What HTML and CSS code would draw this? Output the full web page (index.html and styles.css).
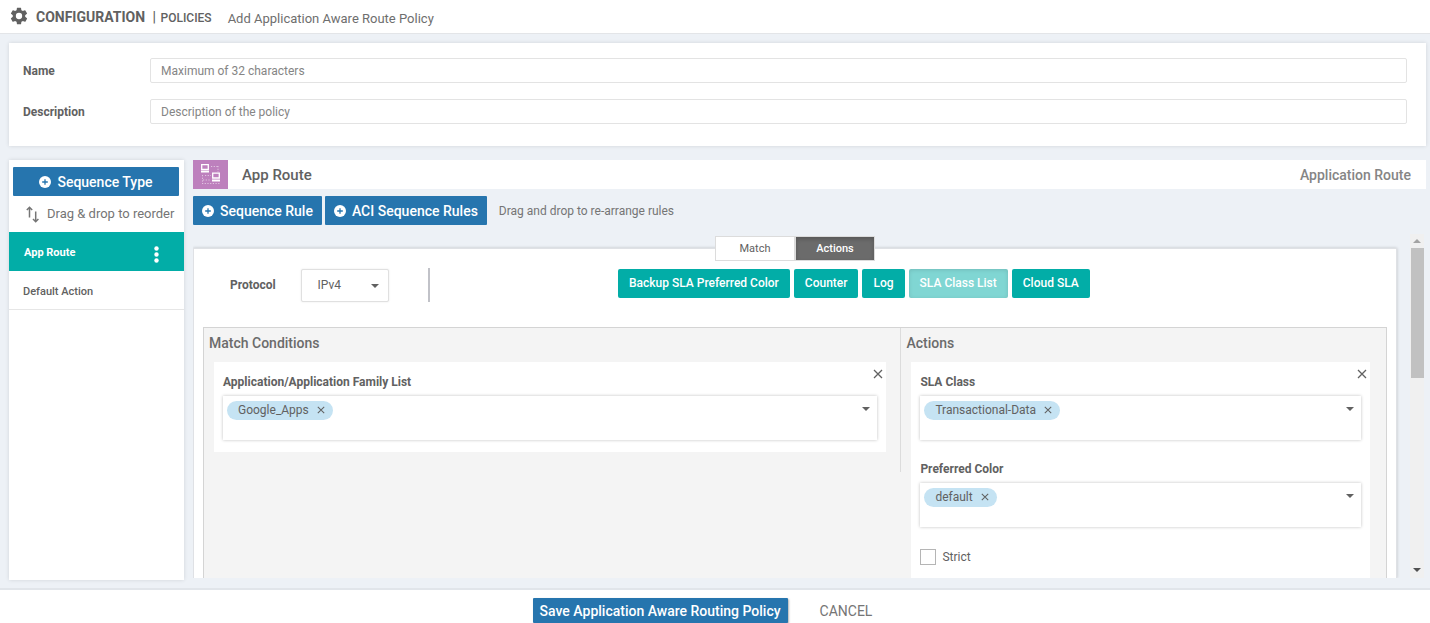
FILE: index.html
```html
<!DOCTYPE html>
<html lang="en">
<head>
<meta charset="utf-8">
<title>Add Application Aware Route Policy</title>
<link rel="stylesheet" href="styles.css">
</head>
<body>
<svg class="defs" aria-hidden="true">
  <symbol id="plus" viewBox="0 0 12 12"><circle cx="6" cy="6" r="6" fill="#fff"/><path d="M6 3.2v5.6M3.2 6h5.6" stroke="#2675ae" stroke-width="1.3" fill="none"/></symbol>
  <symbol id="close" viewBox="0 0 10 10"><path d="M1 1l8 8M9 1l-8 8" stroke="currentColor" stroke-width="1.3" fill="none"/></symbol>
  <symbol id="caret" viewBox="0 0 8 4"><path d="M0 0h8l-4 4z" fill="currentColor"/></symbol>
</svg>
<header class="topbar">
  <svg class="gear" viewBox="0 0 24 24"><path fill="#616161" d="M19.4 13a7.500 7.500 0 0 0 0-2l2.100-1.650a.5.5 0 0 0 .12-.64l-2-3.460a.5.5 0 0 0-.61-.22l-2.490 1a7.300 7.300 0 0 0-1.690-.98l-.38-2.650A.5.5 0 0 0 14 2h-4a.5.5 0 0 0-.49.42l-.38 2.650a7.700 7.700 0 0 0-1.690.98l-2.490-1a.5.5 0 0 0-.61.22l-2 3.460a.5.5 0 0 0 .12.64L4.570 11a8 8 0 0 0 0 2l-2.110 1.650a.5.5 0 0 0-.12.64l2 3.460c.12.22.39.3.61.22l2.490-1c.52.4 1.080.73 1.690.98l.38 2.650c.03.24.24.42.49.42h4c.25 0 .46-.18.49-.42l.38-2.650a7.300 7.300 0 0 0 1.690-.98l2.490 1c.23.09.49 0 .61-.22l2-3.460a.5.5 0 0 0-.12-.64zM12 15.800a3.800 3.800 0 1 1 0-7.600 3.800 3.800 0 0 1 0 7.600z"/></svg>
  <h1 class="title">CONFIGURATION <span class="title-bar">|</span> <span class="title-sub">POLICIES</span></h1>
  <span class="crumb">Add Application Aware Route Policy</span>
</header>

<main class="page">
  <section class="card details">
    <label class="details-label" for="name">Name</label>
    <input class="text-input" id="name" type="text" placeholder="Maximum of 32 characters">
    <label class="details-label" for="description">Description</label>
    <input class="text-input" id="description" type="text" placeholder="Description of the policy">
  </section>

  <div class="workspace">
    <aside class="card sidebar">
      <button class="btn btn-blue btn-wide" type="button"><svg class="plus"><use href="#plus"/></svg>Sequence Type</button>
      <div class="reorder">
        <svg class="reorder-icon" viewBox="0 0 14 17"><path d="M3.500 11.500V1.500M.8 4l2.700-2.700L6.200 4M9.700 5.500v10M7 13l2.700 2.700 2.700-2.700" fill="none" stroke="#757575" stroke-width="1.500"/></svg>
        Drag &amp; drop to reorder
      </div>
      <div class="seq seq-active"><span>App Route</span>
        <button class="dots" type="button" aria-label="Options"><svg viewBox="0 0 5 17"><g fill="#fff"><circle cx="2.500" cy="2.500" r="2.200"/><circle cx="2.500" cy="8.500" r="2.200"/><circle cx="2.500" cy="14.500" r="2.200"/></g></svg></button>
      </div>
      <div class="seq">Default Action</div>
    </aside>

    <section class="content">
      <div class="heading">
        <svg class="heading-icon" viewBox="0 0 35 29"><path fill="#bd80bd" d="M0 0h35v29H0z"/><g fill="none" stroke="#fff" stroke-width="1.300"><path d="M8.700 4.700h6.600v4.600H8.700zM19.700 13.200h6.600v4.800h-6.600z"/></g><path d="M8 10.500h8v2H8zM19 19.500h8v2h-8z" fill="#fff"/><path d="M18 6.500h7M25 6v6M9.500 15v8M9 23.500h18M10 20h8M12 15.500h6" fill="none" stroke="#fff" stroke-opacity=".55" stroke-dasharray="1.200 1.500"/></svg>
        <h2 class="heading-title">App Route</h2>
        <span class="heading-type">Application Route</span>
      </div>
      <div class="rule-bar">
        <button class="btn btn-blue" type="button"><svg class="plus"><use href="#plus"/></svg>Sequence Rule</button>
        <button class="btn btn-blue" type="button"><svg class="plus"><use href="#plus"/></svg>ACI Sequence Rules</button>
        <span class="hint">Drag and drop to re-arrange rules</span>
      </div>

      <div class="editor">
        <div class="editor-main">
          <div class="tabs">
            <button class="tab" type="button">Match</button>
            <button class="tab tab-on" type="button">Actions</button>
          </div>
          <div class="rule">
            <div class="toolbar">
              <div class="protocol">
                <label class="field-label" for="protocol">Protocol</label>
                <span class="select-wrap">
                  <select class="select" id="protocol"><option>IPv4</option></select>
                  <svg class="caret select-caret"><use href="#caret"/></svg>
                </span>
                <span class="separator"></span>
              </div>
              <div class="actions">
                <button class="btn-teal" type="button">Backup SLA Preferred Color</button>
                <button class="btn-teal" type="button">Counter</button>
                <button class="btn-teal" type="button">Log</button>
                <button class="btn-teal btn-faded" type="button">SLA Class List</button>
                <button class="btn-teal" type="button">Cloud SLA</button>
              </div>
            </div>

            <div class="panel">
              <div class="column column-match">
                <h3 class="column-title">Match Conditions</h3>
                <div class="block">
                  <button class="block-close" type="button" aria-label="Remove"><svg><use href="#close"/></svg></button>
                  <div class="field-label">Application/Application Family List</div>
                  <div class="multi">
                    <span class="chip">Google_Apps<button class="chip-close" type="button" aria-label="Remove Google_Apps"><svg><use href="#close"/></svg></button></span>
                    <svg class="caret"><use href="#caret"/></svg>
                  </div>
                </div>
              </div>
              <div class="column column-actions">
                <h3 class="column-title">Actions</h3>
                <div class="block block-tall">
                  <button class="block-close" type="button" aria-label="Remove"><svg><use href="#close"/></svg></button>
                  <div class="field-label">SLA Class</div>
                  <div class="multi">
                    <span class="chip">Transactional-Data<button class="chip-close" type="button" aria-label="Remove Transactional-Data"><svg><use href="#close"/></svg></button></span>
                    <svg class="caret"><use href="#caret"/></svg>
                  </div>
                  <div class="field-label field-label-next">Preferred Color</div>
                  <div class="multi">
                    <span class="chip">default<button class="chip-close" type="button" aria-label="Remove default"><svg><use href="#close"/></svg></button></span>
                    <svg class="caret"><use href="#caret"/></svg>
                  </div>
                  <label class="check"><input class="check-box" type="checkbox">Strict</label>
                </div>
              </div>
            </div>
          </div>
        </div>
        <div class="scroller">
          <svg class="scroll-up" viewBox="0 0 8 4"><path d="M0 4h8l-4-4z" fill="#a3a3a3"/></svg>
          <div class="thumb"></div>
          <svg class="scroll-down" viewBox="0 0 8 4"><path d="M0 0h8l-4 4z" fill="#505050"/></svg>
        </div>
      </div>
    </section>
  </div>
</main>

<footer class="footer">
  <button class="btn btn-blue btn-save" type="button">Save Application Aware Routing Policy</button>
  <button class="cancel" type="button">CANCEL</button>
</footer>
</body>
</html>
```
FILE: styles.css
```css
* { box-sizing: border-box; }

body {
  margin: 0;
  height: 100vh;
  display: flex;
  flex-direction: column;
  overflow: hidden;
  background: #edf1f6;
  color: #616161;
  font: 12px/16px Roboto, "Liberation Sans", sans-serif;
}

button, input, select { font: inherit; color: inherit; }
button { border: 0; padding: 0; background: none; cursor: pointer; white-space: nowrap; }
h1, h2, h3 { margin: 0; }
svg { display: block; flex: none; }
.defs { position: absolute; width: 0; height: 0; }

.topbar {
  display: flex;
  align-items: center;
  height: 34px;
  padding-left: 9px;
  background: #fff;
  border-bottom: 1px solid #e3e5e8;
}
.gear { width: 20px; height: 20px; margin: 0 7px 2px 0; }
.title { margin-top: 2px; font-size: 14px; font-weight: 700; line-height: 20px; }
.title-bar { margin: 0 1px 0 4px; font-weight: 500; }
.title-sub { font-size: 12px; font-weight: 500; }
.crumb { margin: 4px 0 0 16px; font-size: 13px; color: #6e6e6e; }

.page {
  flex: 1;
  min-height: 0;
  display: flex;
  flex-direction: column;
  gap: 14px;
  padding: 9px 4px 8px 9px;
}
.card { background: #fff; box-shadow: 0 0 4px rgba(0, 0, 0, .12); }

.details {
  display: grid;
  grid-template-columns: 127px 1fr;
  row-gap: 16px;
  align-items: center;
  padding: 15px 19px 22px 14px;
}
.details-label, .field-label { font-weight: 700; }
.text-input {
  height: 25px;
  width: 100%;
  padding: 0 10px;
  border: 1px solid #e3e3e3;
  border-radius: 2px;
  background: #fff;
}
.text-input::placeholder { color: #858585; opacity: 1; }

.workspace { flex: 1; min-height: 0; display: flex; gap: 9px; }
.sidebar { width: 175px; flex: none; padding-top: 7px; }

.btn {
  display: flex;
  align-items: center;
  justify-content: center;
  height: 29px;
  padding: 0 9px;
  border-radius: 1px;
  font-size: 14px;
  font-weight: 500;
}
.btn-blue { background: #2675ae; color: #fff; }
.btn-wide { width: calc(100% - 9px); margin-left: 4px; }
.plus { width: 12px; height: 12px; margin-right: 6px; }

.reorder {
  display: flex;
  align-items: center;
  gap: 7px;
  height: 36px;
  padding-left: 17px;
  font-size: 13px;
  color: #757575;
  white-space: nowrap;
}
.reorder-icon { width: 14px; height: 17px; }
.seq {
  display: flex;
  align-items: center;
  justify-content: space-between;
  height: 39px;
  padding: 3px 25px 0 14px;
  border-bottom: 1px solid #e6e6e6;
  font-size: 11px;
  font-weight: 500;
}
.seq-active { background: #02ada7; border-color: #02ada7; color: #fff; font-weight: 700; padding-left: 15px; }
.dots { margin-top: 3px; }
.dots svg { width: 5px; height: 17px; }

.content { flex: 1; min-width: 0; display: flex; flex-direction: column; }
.heading { display: flex; align-items: center; height: 29px; background: #fff; font-size: 14px; font-weight: 500; }
.heading-icon { width: 35px; height: 29px; }
.heading-title { margin-left: 14px; font-size: 15px; font-weight: 500; }
.heading-type { margin: 0 15px 0 auto; color: #858585; }
.rule-bar { display: flex; align-items: center; gap: 3px; margin-top: 7px; }
.hint { margin-left: 9px; color: #757575; }

.editor { flex: 1; min-height: 0; display: flex; gap: 13px; margin: 9px 2px 2px 0; overflow: hidden; }
.editor-main { flex: 1; min-width: 0; display: flex; flex-direction: column; align-items: center; padding: 2px 0 0; }
.tabs { display: flex; z-index: 1; width: 160px; height: 25px; margin-bottom: -13px; }
.tab { flex: 1; background: #fff; border: 1px solid #dcdcdc; font-size: 11px; }
.tab-on { background: #6b6b6b; color: #fff; font-weight: 500; box-shadow: inset 0 2px 4px rgba(0, 0, 0, .2); }

.rule {
  flex: 1;
  min-height: 0;
  width: 100%;
  display: flex;
  flex-direction: column;
  padding: 19px 9px 0;
  background: #fff;
  border: 1px solid #dfe1e5;
  border-width: 1px 1px 0;
  box-shadow: 0 0 3px rgba(0, 0, 0, .2);
}
.toolbar { display: grid; grid-template-columns: 415px 1fr; align-items: start; }
.protocol { display: flex; align-items: center; padding-left: 27px; }
.select-wrap { position: relative; margin: 0 39px 0 25px; }
.select {
  display: block;
  width: 88px;
  height: 33px;
  padding: 0 16px;
  appearance: none;
  border: 1px solid #e0e0e0;
  border-radius: 2px;
  background: #fff;
  box-shadow: 0 0 2px rgba(0, 0, 0, .1);
}
.caret { width: 8px; height: 4px; color: #616161; }
.select-caret { position: absolute; right: 10px; top: 15px; pointer-events: none; }
.separator { width: 2px; height: 34px; background: #c1c2c8; }
.actions { display: flex; gap: 4px; padding-top: 1px; }
.btn-teal {
  height: 29px;
  padding: 0 11px 1px;
  border-radius: 2px;
  background: #02ada7;
  color: #fff;
  font-weight: 500;
}
.btn-faded { background: #80d6d3; box-shadow: inset 0 1px 4px rgba(0, 0, 0, .12); }

.panel {
  flex: 1;
  min-height: 0;
  display: grid;
  grid-template-columns: 59fr 41fr;
  align-items: start;
  margin-top: 25px;
  background: #f4f4f4;
  border: 1px solid #d4d4d4;
  border-bottom: 0;
}
.column { padding: 7px 14px 0 10px; }
.column-match { min-height: 144px; border-right: 1px solid #dcdcdc; }
.column-actions { padding-right: 16px; }
.column-title { margin: 0 0 11px -5px; font-size: 14px; font-weight: 500; color: #6b6b6b; }
.block { position: relative; padding: 12px 9px; background: #fff; }
.block-tall { padding-bottom: 24px; }
.block-close { position: absolute; right: 3px; top: 7px; }
.block-close svg { width: 10px; height: 10px; }
.field-label-next { margin-top: 21px; }
.multi {
  display: flex;
  align-items: flex-start;
  justify-content: space-between;
  height: 44px;
  margin-top: 6px;
  padding: 5px 7px 0 4px;
  background: #fff;
  box-shadow: 0 0 3px rgba(0, 0, 0, .25);
}
.multi .caret { margin-top: 6px; }
.chip {
  display: flex;
  align-items: center;
  gap: 8px;
  height: 19px;
  padding: 0 8px 1px 11px;
  border-radius: 10px;
  background: #c5e3f3;
}
.chip-close svg { width: 8px; height: 8px; }
.check { display: flex; align-items: center; gap: 6px; margin-top: 22px; }
.check-box { appearance: none; width: 16px; height: 16px; margin: 0; border: 1px solid #b5b5b5; background: #fff; }

.scroller {
  display: flex;
  flex-direction: column;
  align-items: center;
  width: 14px;
  padding: 5px 0 6px;
  background: #f0f0f0;
}
.scroll-up, .scroll-down { width: 8px; height: 4px; }
.thumb { width: 13px; height: 130px; margin-top: 5px; background: #c1c1c1; }
.scroll-down { margin-top: auto; }

.footer {
  display: flex;
  justify-content: center;
  align-items: flex-end;
  gap: 32px;
  height: 35px;
  flex: none;
  padding-right: 25px;
  background: #fff;
  border-top: 2px solid #e1e5ea;
}
.btn-save { height: 25px; padding: 0 7px; box-shadow: 1px 1px 2px rgba(0, 0, 0, .3); }
.cancel { height: 25px; font-size: 14px; color: #757575; }
```
